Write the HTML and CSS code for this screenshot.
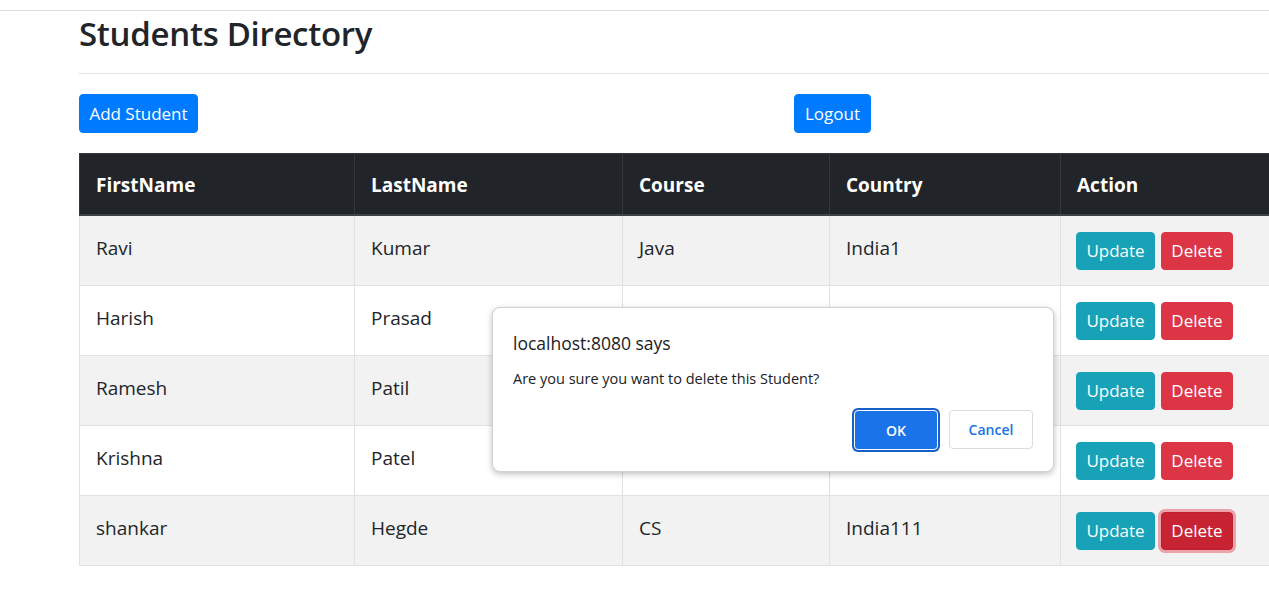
FILE: index.html
```html
<!DOCTYPE html>
<html lang="en">
<head>
<meta charset="utf-8">
<title>Students Directory</title>
<link rel="stylesheet" href="styles.css">
</head>
<body>
<div class="topbar"></div>
<main class="container">
  <h1 class="title">Students Directory</h1>
  <hr class="rule">
  <div class="actions">
    <button class="btn btn-primary add">Add Student</button>
    <button class="btn btn-primary logout">Logout</button>
  </div>
  <table class="students">
    <colgroup>
      <col class="c1"><col class="c2"><col class="c3"><col class="c4"><col class="c5">
    </colgroup>
    <thead>
      <tr>
        <th>FirstName</th>
        <th>LastName</th>
        <th>Course</th>
        <th>Country</th>
        <th>Action</th>
      </tr>
    </thead>
    <tbody>
      <tr>
        <td>Ravi</td><td>Kumar</td><td>Java</td><td>India1</td>
        <td class="act"><div class="row-btns"><button class="btn btn-info">Update</button><button class="btn btn-danger">Delete</button></div></td>
      </tr>
      <tr>
        <td>Harish</td><td>Prasad</td><td></td><td></td>
        <td class="act"><div class="row-btns"><button class="btn btn-info">Update</button><button class="btn btn-danger">Delete</button></div></td>
      </tr>
      <tr>
        <td>Ramesh</td><td>Patil</td><td></td><td></td>
        <td class="act"><div class="row-btns"><button class="btn btn-info">Update</button><button class="btn btn-danger">Delete</button></div></td>
      </tr>
      <tr>
        <td>Krishna</td><td>Patel</td><td></td><td></td>
        <td class="act"><div class="row-btns"><button class="btn btn-info">Update</button><button class="btn btn-danger">Delete</button></div></td>
      </tr>
      <tr>
        <td>shankar</td><td>Hegde</td><td>CS</td><td>India111</td>
        <td class="act"><div class="row-btns"><button class="btn btn-info">Update</button><button class="btn btn-danger active">Delete</button></div></td>
      </tr>
    </tbody>
  </table>
</main>

<div class="dialog" role="alertdialog">
  <div class="dialog-title">localhost:8080 says</div>
  <div class="dialog-msg">Are you sure you want to delete this Student?</div>
  <div class="dialog-btns">
    <button class="dbtn ok">OK</button>
    <button class="dbtn cancel">Cancel</button>
  </div>
</div>
</body>
</html>
```
FILE: styles.css
```css
html, body {
  margin: 0;
  padding: 0;
  overflow: hidden;
  background: #fff;
}
body {
  font-family: "Open Sans", "Noto Sans", sans-serif;
  color: #212529;
  width: 1269px;
  height: 593px;
  position: relative;
}
.topbar {
  height: 10px;
  border-bottom: 1px solid #dcdcdc;
}
.container {
  padding-left: 79px;
}
.title {
  margin: 1px 0 0;
  font-size: 33px;
  font-weight: 600;
  line-height: 43px;
  letter-spacing: -0.3px;
  color: #212529;
}
.rule {
  margin: 18px 0 0;
  border: 0;
  border-top: 1px solid #e3e3e3;
  height: 0;
}
.actions {
  display: flex;
  margin-top: 20px;
  height: 39px;
}
.btn {
  font-family: inherit;
  border: 1px solid transparent;
  border-radius: 4px;
  color: #fff;
  font-size: 17px;
  line-height: 24px;
  padding: 0 8px;
  white-space: nowrap;
  cursor: pointer;
}
.btn-primary { background: #007bff; border-color: #007bff; }
.btn-info { background: #17a2b8; border-color: #17a2b8; }
.btn-danger { background: #dc3545; border-color: #dc3545; }
.btn-danger.active {
  background: #c82333;
  border-color: #bd2130;
  box-shadow: 0 0 0 3px rgba(225, 83, 97, 0.5);
}
.add { height: 39px; width: 119px; }
.logout { height: 39px; width: 77px; margin-left: 596px; }

.students {
  margin-top: 20px;
  border-collapse: collapse;
  table-layout: fixed;
  width: 1201px;
  font-size: 19px;
  line-height: 30px;
}
.c1 { width: 275px; }
.c2 { width: 268px; }
.c3 { width: 207px; }
.c4 { width: 231px; }
.c5 { width: 220px; }
.students th, .students td {
  text-align: left;
  vertical-align: top;
  border: 1px solid #dee2e6;
  padding: 17px 16px 16px;
  white-space: nowrap;
}
.students td.act {
  padding: 16px 16px 15px 15px;
}
.students thead th {
  background: #212529;
  color: #fff;
  font-weight: 700;
  border-color: #32383e;
  border-bottom: 2px solid #3c4248;
  padding: 16px 16px 14px;
}
.students tbody tr:nth-child(odd) td { background: #f2f2f2; }
.row-btns {
  display: flex;
  gap: 6px;
}
.row-btns .btn { height: 38px; }
.row-btns .btn-info { width: 79px; }
.row-btns .btn-danger { width: 72px; }

.dialog {
  position: absolute;
  left: 492px;
  top: 307px;
  width: 520px;
  padding: 22px 20px 21px;
  background: #fff;
  border: 1px solid #d2d2d2;
  border-radius: 8px;
  box-shadow: 0 2px 6px rgba(0, 0, 0, 0.25);
  font-family: "Open Sans", "Noto Sans", sans-serif;
  color: #202124;
}
.dialog-title {
  font-size: 17.5px;
  line-height: 26px;
}
.dialog-msg {
  margin-top: 13px;
  font-size: 14.5px;
  line-height: 20px;
}
.dialog-btns {
  display: flex;
  justify-content: flex-end;
  gap: 11px;
  margin-top: 21px;
}
.dbtn {
  font-family: inherit;
  width: 84px;
  height: 40px;
  border-radius: 4px;
  font-size: 14px;
  font-weight: 600;
  cursor: pointer;
}
.ok {
  background: #1a73e8;
  color: #fff;
  border: 1px solid #fff;
  box-shadow: 0 0 0 2px #1a5fc8;
}
.cancel {
  background: #fff;
  color: #1a73e8;
  border: 1px solid #dadce0;
  height: 39px;
}
```
